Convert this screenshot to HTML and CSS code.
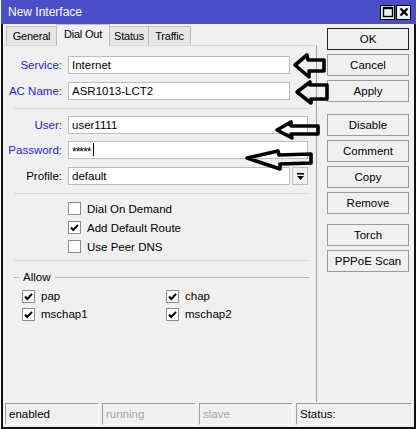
FILE: index.html
```html
<!DOCTYPE html>
<html lang="en">
<head>
    <meta charset="UTF-8">
    <title>New Interface</title>
    <link rel="stylesheet" href="styles.css">
</head>
<body>
    <div class="window">
        <div class="titlebar">
            <span class="title">New Interface</span>
            <span class="win-btn">
                <svg width="12" height="12" viewBox="0 0 12 12"><rect x="1.5" y="1.5" width="9" height="9" fill="none" stroke="#000" stroke-width="1.4"/><line x1="1.5" y1="2.5" x2="10.5" y2="2.5" stroke="#000" stroke-width="1.4"/></svg>
            </span>
            <span class="win-btn">
                <svg width="12" height="12" viewBox="0 0 12 12"><path d="M2.5 2.5 L9.5 9.5 M9.5 2.5 L2.5 9.5" stroke="#000" stroke-width="2.2"/></svg>
            </span>
        </div>

        <div class="main">
            <div class="left">
                <div class="tabs">
                    <span class="tab t-general">General</span>
                    <span class="tab t-dial active">Dial Out</span>
                    <span class="tab t-status">Status</span>
                    <span class="tab t-traffic">Traffic</span>
                </div>
                <div class="panel">
                    <div class="field">
                        <label class="req">Service:</label>
                        <span class="input short">Internet</span>
                    </div>
                    <div class="field">
                        <label class="req">AC Name:</label>
                        <span class="input short">ASR1013-LCT2</span>
                    </div>
                    <div class="sep sep-1"></div>
                    <div class="field tight">
                        <label class="req">User:</label>
                        <span class="input">user1111</span>
                    </div>
                    <div class="field">
                        <label class="req">Password:</label>
                        <span class="input pass">*****<i class="caret"></i></span>
                    </div>
                    <div class="field">
                        <label>Profile:</label>
                        <span class="input short">default</span>
                        <span class="drop">
                            <svg width="9" height="9" viewBox="0 0 9 9"><rect x="1" y="1" width="7" height="1.5" fill="#000"/><path d="M1 4 H8 L4.5 8 Z" fill="#000"/></svg>
                        </span>
                    </div>
                    <div class="sep sep-2"></div>
                    <div class="checks">
                        <div class="check"><span class="box"></span>Dial On Demand</div>
                        <div class="check"><span class="box on"></span>Add Default Route</div>
                        <div class="check"><span class="box"></span>Use Peer DNS</div>
                    </div>
                    <div class="sep sep-3"></div>
                    <div class="group">
                        <div class="legend"><span class="dash"></span>Allow<span class="rule"></span></div>
                        <div class="grid">
                            <div class="check"><span class="box on"></span>pap</div>
                            <div class="check"><span class="box on"></span>chap</div>
                            <div class="check"><span class="box on"></span>mschap1</div>
                            <div class="check"><span class="box on"></span>mschap2</div>
                        </div>
                    </div>
                </div>
            </div>

            <div class="side">
                <button class="default">OK</button>
                <button>Cancel</button>
                <button>Apply</button>
                <button class="gap">Disable</button>
                <button>Comment</button>
                <button>Copy</button>
                <button>Remove</button>
                <button class="gap-sm">Torch</button>
                <button>PPPoE Scan</button>
            </div>
        </div>

        <div class="statusbar">
            <span class="cell">enabled</span>
            <span class="cell dim">running</span>
            <span class="cell dim">slave</span>
            <span class="cell wide">Status:</span>
        </div>

        <!-- hand drawn pointer arrows on top of the dialog -->
        <svg class="marks" width="416" height="429" viewBox="0 0 416 429">
            <g fill="none" stroke="#000" stroke-width="3.6" stroke-linejoin="round">
                <path d="M295 65 L307 55 L308 60 L324 60 L324 71 L309 71 L309 77 Z"/>
                <path d="M297 92 L310 82 L310 85 L327 85 L327 99 L311 99 L311 103 Z"/>
                <path d="M277 130 L291 122 L291 126 L318 126 L318 134 L291 134 L292 138 Z"/>
                <path d="M247 158 L278 151 L279 155 L311 154 L311 163 L280 164 L280 169 Z"/>
            </g>
        </svg>
    </div>
</body>
</html>
```

FILE: styles.css
```css
* {
    box-sizing: border-box;
}
body {
    margin: 0;
    background: #fff;
    font-family: "Liberation Sans", Arial, sans-serif;
    font-size: 11px;
    color: #000;
}
.window {
    position: relative;
    width: 415px;
    height: 429px;
    margin-left: 1px;
    background: #f0f0f0;
    border: 2px solid #111;
    border-top: none;
    display: flex;
    flex-direction: column;
}
.titlebar {
    height: 24px;
    margin: 0 -2px;
    background: #4a4fc9;
    display: flex;
    align-items: center;
    padding: 0 5px 0 7px;
    gap: 1px;
}
.title {
    flex: 1;
    color: #fff;
    font-size: 12px;
}
.win-btn {
    width: 15px;
    height: 15px;
    background: #f0f0f0;
    border: 1px solid #000;
    display: flex;
    align-items: center;
    justify-content: center;
}
.main {
    display: flex;
    height: 378px;
}
.left {
    width: 314px;
    display: flex;
    flex-direction: column;
}
.tabs {
    height: 22px;
    display: flex;
    align-items: flex-end;
    padding-left: 3px;
    border-bottom: 1px solid #d8d8d8;
}
.tab {
    height: 19px;
    padding-top: 3px;
    text-align: center;
    border: 1px solid #c0c0c0;
    border-bottom: none;
    background: #e6e6e6;
    font-size: 11px;
    letter-spacing: -0.2px;
    margin-right: -1px;
}
.t-general { width: 51px; }
.t-dial { width: 54px; }
.t-status { width: 40px; }
.t-traffic { width: 43px; }
.tab.active {
    height: 22px;
    background: #f0f0f0;
    position: relative;
    z-index: 1;
    margin-bottom: -1px;
}
.panel {
    flex: 1;
    padding-top: 10px;
    border-right: 1px solid #a0a0a0;
}
.field {
    display: flex;
    align-items: center;
    height: 18px;
    margin-bottom: 8px;
}
.field.tight {
    margin-bottom: 7px;
}
.field label {
    width: 59px;
    margin-right: 6px;
    text-align: right;
    font-size: 11.5px;
}
.field label.req {
    color: #1c1ce6;
}
.input {
    width: 240px;
    height: 18px;
    background: #fff;
    border: 1px solid #bdbdbd;
    padding: 1px 3px;
    font-size: 11.5px;
    display: flex;
    align-items: center;
}
.input.short {
    width: 222px;
}
.input.pass {
    font-size: 12px;
    letter-spacing: -1px;
    padding-top: 5px;
}
.caret {
    display: inline-block;
    width: 1px;
    height: 13px;
    margin: -5px 0 0 3px;
    background: #000;
}
.drop {
    width: 16px;
    height: 18px;
    margin-left: 2px;
    border: 1px solid #bdbdbd;
    background: #f0f0f0;
    display: flex;
    align-items: center;
    justify-content: center;
}
.sep {
    height: 1px;
    margin: 0 7px 0 11px;
    background: #d8d8d8;
}
.sep-1 {
    margin-top: 2px;
    margin-bottom: 7px;
}
.sep-2 {
    margin-top: 0;
}
.checks {
    padding: 5px 0 0 65px;
}
.check {
    display: flex;
    align-items: center;
    height: 19px;
    font-size: 11.5px;
}
.box {
    width: 13px;
    height: 13px;
    margin-right: 6px;
    background: #fff;
    border: 1px solid #8c8c8c;
}
.box.on {
    background: #fff url("data:image/svg+xml,%3Csvg xmlns='http://www.w3.org/2000/svg' width='11' height='11'%3E%3Cpath d='M2 5.5 L4.3 8 L9 2.8' fill='none' stroke='%23000' stroke-width='2'/%3E%3C/svg%3E") center no-repeat;
}
.sep-3 {
    margin-top: 4px;
}
.group {
    padding: 9px 7px 0 7px;
}
.legend {
    display: flex;
    align-items: center;
    font-size: 11.5px;
    height: 14px;
}
.legend .dash {
    width: 6px;
    height: 1px;
    margin: 0 4px 0 3px;
    background: #b8b8b8;
}
.legend .rule {
    flex: 1;
    height: 1px;
    margin-left: 5px;
    background: #b8b8b8;
}
.grid {
    display: grid;
    grid-template-columns: 144px 1fr;
    padding: 3px 0 0 12px;
}
.grid .check {
    height: 18px;
}
.side {
    flex: 1;
    display: flex;
    flex-direction: column;
    padding: 4px 0 0 10px;
}
button {
    width: 82px;
    height: 22px;
    margin-bottom: 4px;
    background: #f0f0f0;
    border: 1px solid #9a9a9a;
    font-family: inherit;
    font-size: 11.5px;
    padding: 0;
}
button.default {
    border-color: #222;
}
button.gap {
    margin-top: 8px;
}
button.gap-sm {
    margin-top: 6px;
}
.statusbar {
    display: flex;
    gap: 3px;
    padding: 1px 2px 0 2px;
}
.cell {
    width: 94px;
    height: 22px;
    border: 1px solid #fff;
    border-top-color: #a0a0a0;
    border-left-color: #a0a0a0;
    padding: 4px 3px 0 3px;
    font-size: 11.5px;
}
.cell.dim {
    color: #a8a8a8;
}
.cell.wide {
    flex: 1;
}
.marks {
    position: absolute;
    left: -3px;
    top: 0;
}
```
